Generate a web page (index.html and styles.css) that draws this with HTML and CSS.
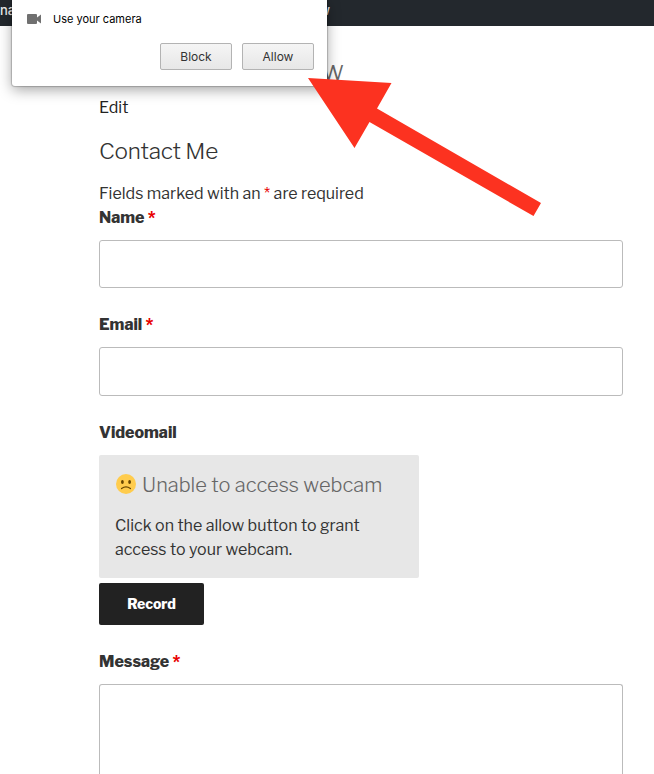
FILE: index.html
```html
<!DOCTYPE html>
<html lang="en">
<head>
<meta charset="utf-8">
<title>Contact Me</title>
<link rel="stylesheet" href="styles.css">
</head>
<body>
<header class="admin-bar"><span>na</span><span class="view">w</span></header>
<main class="page">
  <h1 class="page-title">W</h1>
  <a class="edit">Edit</a>
  <h2 class="form-title">Contact Me</h2>
  <form>
    <p class="hint">Fields marked with an <b class="req">*</b> are required</p>
    <label class="label" for="name">Name <span class="req">*</span></label>
    <input class="input" id="name" type="text">
    <label class="label spaced" for="email">Email <span class="req">*</span></label>
    <input class="input email" id="email" type="text">
    <div class="label spaced">Videomail</div>
    <section class="notice">
      <h3 class="notice-title">
        <svg class="face" viewBox="0 0 20 20"><circle cx="10" cy="10" r="10" fill="#ffcc4d"/><ellipse cx="6.4" cy="8" rx="1.4" ry="2" fill="#664500"/><ellipse cx="13.6" cy="8" rx="1.4" ry="2" fill="#664500"/><path d="M5.600 14.500Q10 11.300 14.400 14.500" fill="none" stroke="#664500" stroke-width="1.300" stroke-linecap="round"/></svg>
        <span>Unable to access webcam</span>
      </h3>
      <p class="notice-text">Click on the allow button to grant access to your webcam.</p>
    </section>
    <button class="record" type="button">Record</button>
    <label class="label spaced" for="message">Message <span class="req">*</span></label>
    <textarea class="input message" id="message"></textarea>
  </form>
</main>
<aside class="permission">
  <div class="permission-row">
    <svg class="camera" viewBox="0 0 14 10"><path d="M1 0h8q1 0 1 1v2.500L14 .5v9l-4-3V9q0 1-1 1H1Q0 10 0 9V1Q0 0 1 0z" fill="#707070"/></svg>
    <span>Use your camera</span>
  </div>
  <div class="actions"><button type="button">Block</button><button type="button">Allow</button></div>
</aside>
<svg class="arrow" viewBox="0 0 234 140"><path d="M0 0L83.500 5L69 30.500L233 125L225.500 138L61.500 44L46.500 70Z" fill="#fc3220"/></svg>
</body>
</html>
```

FILE: styles.css
```css
* { box-sizing: border-box; }
html, body { margin: 0; height: 774px; overflow: hidden; }
body { position: relative; background: #fff; color: #333; font: 16px/24px "Libre Franklin", Inter, "Liberation Sans", sans-serif; }
h1, h2, h3, p { margin: 0; }
.admin-bar { height: 26px; background: #23282d; color: #eee; font: 500 13px/21px Inter, "Liberation Sans", sans-serif; display: flex; justify-content: space-between; padding: 0 324px 0 0; }
.page { width: 524px; margin-left: 99px; }
.page-title { height: 70px; padding: 32px 279px 0 0; text-align: right; font-size: 21px; line-height: 30px; font-weight: 400; color: #666; }
.edit { display: block; height: 24px; color: #222; }
.form-title { margin-top: 16px; height: 32px; font-size: 22.500px; line-height: 31px; font-weight: 300; letter-spacing: -.2px; }
.hint { margin-top: 14px; white-space: nowrap; }
.req { color: #e80000; font-weight: inherit; }
.label { display: block; height: 24px; font-weight: 800; }
.input { display: block; width: 524px; height: 48px; margin: 10px 0 0; padding: 11px; border: 1px solid #bbb; border-radius: 3px; background: #fff; resize: none; outline: 0; }
.spaced { margin-top: 25px; }
.email { height: 49px; }
.notice { width: 320px; height: 123px; margin-top: 10px; padding: 15px 16px; background: #e7e7e7; border-radius: 2px; }
.notice-title { display: flex; align-items: center; height: 28px; gap: 6px; font-size: 20px; line-height: 28px; font-weight: 300; color: #666; white-space: nowrap; }
.notice-title span { padding-top: 2px; letter-spacing: .02px; }
.face { width: 20px; height: 20px; margin-left: 1px; flex: none; }
.notice-text { margin-top: 15px; padding-top: 1px; width: 270px; }
.record { display: block; width: 105px; height: 42px; margin-top: 5px; padding: 0; border: 0; border-radius: 2px; background: #222; color: #fff; font: 800 14px/42px "Libre Franklin", Inter, sans-serif; }
.message { height: 90px; border-bottom: 0; border-radius: 3px 3px 0 0; }
.permission { position: absolute; top: 0; left: 12px; width: 315px; height: 86px; padding: 10px 13px 0 15px; background: #fff; border-radius: 0 0 3px 3px; box-shadow: 0 0 1px 1px rgba(0,0,0,.2), 0 4px 14px rgba(0,0,0,.35); color: #000; font: 11px/18px Inter, "Liberation Sans", sans-serif; }
.permission-row { display: flex; align-items: center; height: 18px; gap: 12px; }
.camera { width: 14px; height: 10px; }
.actions { display: flex; justify-content: flex-end; gap: 10px; margin-top: 15px; }
.actions button { width: 72px; height: 27px; padding: 0; border: 1px solid #b3b3b3; border-radius: 2px; background: linear-gradient(#f5f5f5, #e7e7e7); color: #333; font: 12px/25px Inter, "Liberation Sans", sans-serif; }
.arrow { position: absolute; left: 308px; top: 78px; width: 234px; height: 140px; }
```
